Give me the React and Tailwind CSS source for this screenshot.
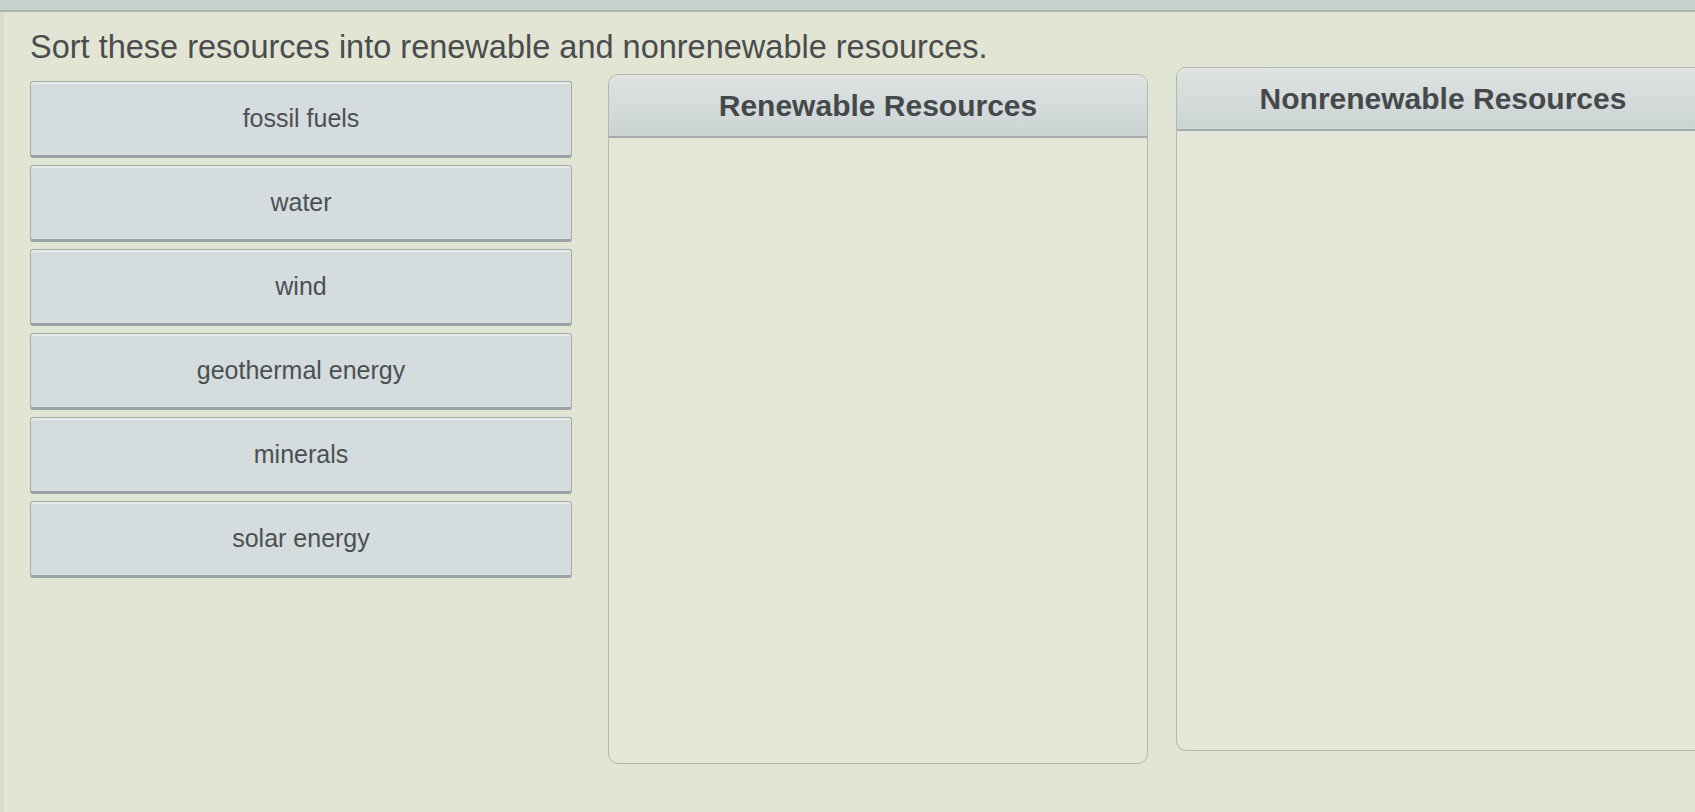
const items = ['fossil fuels', 'water', 'wind', 'geothermal energy', 'minerals', 'solar energy']

function DropBox({ title, className }) {
  return (
    <div className={`flex flex-col rounded-[10px] border border-[#b3b8ab] bg-[#e4e7d8] overflow-hidden ${className}`}>
      <div className="h-[63px] shrink-0 flex items-center justify-center bg-gradient-to-b from-[#dfe4e2] to-[#cbd3d3] border-b-2 border-[#a3abab]">
        <span className="text-[30px] font-bold text-[#45494b]">{title}</span>
      </div>
      <div className="flex-1" />
    </div>
  )
}

export default function App() {
  return (
    <div className="w-[1695px] h-[812px] overflow-hidden bg-[#e3e5d4] font-['Liberation_Sans',Arial,sans-serif]">
      <div className="h-[12px] bg-[#c9d1cd] border-b-2 border-[#aab3b0]" />
      <div className="h-[800px] pl-[26px] pt-[16px] border-l-4 border-[#d9dccb]">
        <h1 className="text-[32.5px] leading-[38px] text-[#4a4c4d]">
          Sort these resources into renewable and nonrenewable resources.
        </h1>
        <div className="flex items-start mt-[4px]">
          <div className="w-[542px] shrink-0 flex flex-col gap-[7px] mt-[11px]">
            {items.map((it) => (
              <div
                key={it}
                className="h-[77px] flex items-center justify-center rounded-[3px] border border-[#a3acac] border-b-[3px] border-b-[#9aa3a3] bg-[#d4dcdd] shadow-[inset_0_2px_0_#e6ecec]"
              >
                <span className="text-[25px] text-[#4c5053]">{it}</span>
              </div>
            ))}
          </div>
          <DropBox title="Renewable Resources" className="w-[540px] h-[690px] shrink-0 ml-[36px] mt-[4px]" />
          <DropBox title="Nonrenewable Resources" className="w-[534px] h-[684px] shrink-0 ml-[28px] -mt-[3px]" />
        </div>
      </div>
    </div>
  )
}
